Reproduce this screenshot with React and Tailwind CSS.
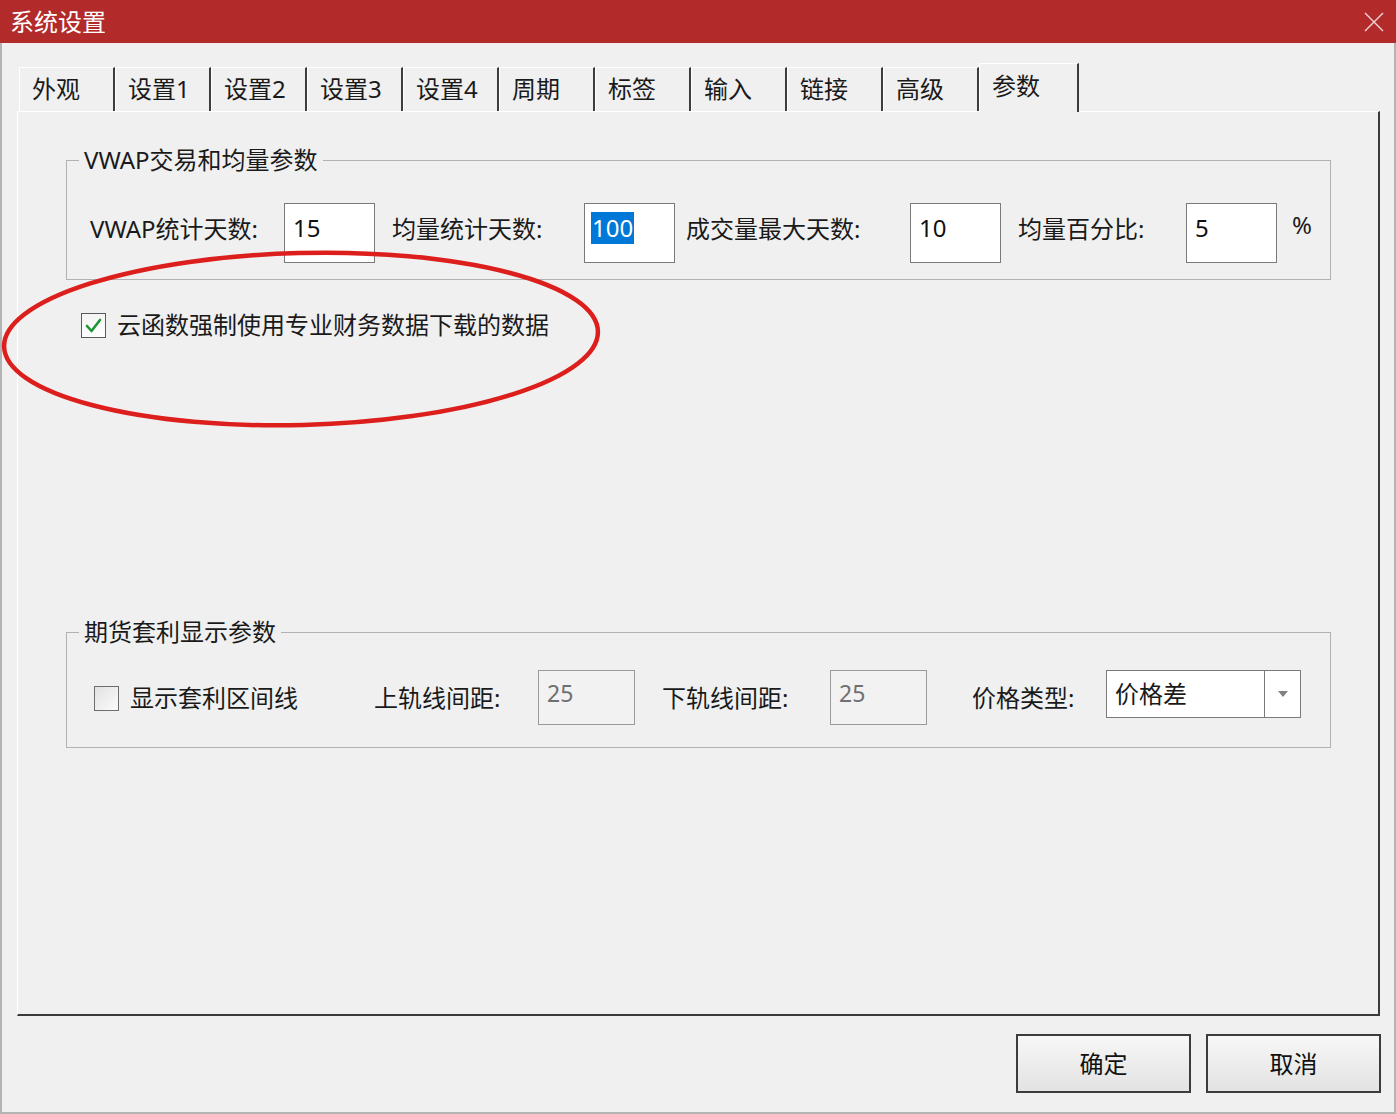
import React from "react";

const FONT = { fontFamily: '"Noto Sans", "Noto Sans CJK SC", sans-serif' };

const TABS = ["外观", "设置1", "设置2", "设置3", "设置4", "周期", "标签", "输入", "链接", "高级"];

function Tab({ label }) {
  return (
    <div className="w-[96px] h-[44px] border-t border-l border-white border-r-2 border-r-[#3c3c3c] pl-[12px] leading-[42px] text-[24px] text-[#1a1a1a]">
      {label}
    </div>
  );
}

function ActiveTab({ label }) {
  return (
    <div className="relative z-10 -mb-px w-[100px] h-[49px] bg-[#f0f0f0] border-t border-l border-white border-r-2 border-r-[#3c3c3c] pl-[12px] pt-[6px] leading-[32px] text-[24px] text-[#1a1a1a]">
      {label}
    </div>
  );
}

function TextBox({ children, width = "w-[91px]", height = "h-[60px]" }) {
  return (
    <div className={`${width} ${height} shrink-0 bg-white border border-[#7a7a7a] pl-[8px] pt-[9px] leading-[30px] text-[24px] text-[#111]`}>
      {children}
    </div>
  );
}

function DisabledBox({ children }) {
  return (
    <div className="w-[97px] h-[55px] shrink-0 bg-[#f2f2f2] border border-[#9a9a9a] pl-[8px] pt-[7px] leading-[30px] text-[23px] text-[#707070]">
      {children}
    </div>
  );
}

function CheckedBox() {
  return (
    <div className="w-[25px] h-[25px] shrink-0 border border-[#5a5a5a] bg-gradient-to-b from-[#f4f4f4] to-[#ffffff]">
      <svg width="23" height="23" viewBox="0 0 23 23">
        <path d="M5 12 L9.5 17 L18 6" fill="none" stroke="#1e9636" strokeWidth="2.6" strokeLinecap="round" strokeLinejoin="round" />
      </svg>
    </div>
  );
}

function EmptyBox() {
  return (
    <div className="w-[25px] h-[25px] shrink-0 border border-[#6e6e6e] bg-gradient-to-br from-[#e2e2e2] to-[#fbfbfb]" />
  );
}

function Button({ children }) {
  return (
    <div className="w-[175px] h-[59px] border-2 border-[#3c3c3c] bg-gradient-to-b from-[#f7f7f7] to-[#e3e3e3] flex items-center justify-center text-[24px] text-[#111]">
      {children}
    </div>
  );
}

export default function App() {
  return (
    <div className="relative w-[1396px] h-[1114px] bg-[#f0f0f0] overflow-hidden flex flex-col" style={FONT}>
      {/* title bar */}
      <div className="h-[43px] shrink-0 bg-[#b22b2a] flex items-center justify-between pl-[10px] pr-[12px]">
        <span className="text-white text-[24px] leading-[43px]">系统设置</span>
        <svg width="20" height="20" viewBox="0 0 20 20">
          <path d="M1 1 L19 19 M19 1 L1 19" stroke="#f3d6d6" strokeWidth="1.4" />
        </svg>
      </div>

      {/* window body */}
      <div className="flex-1 flex flex-col border-l-2 border-r-2 border-b-2 border-[#b4b4b4]">
        {/* tab strip */}
        <div className="mt-[20px] ml-[17px] h-[48px] flex items-end">
          {TABS.map((t) => (
            <Tab key={t} label={t} />
          ))}
          <ActiveTab label="参数" />
        </div>

        {/* tab page */}
        <div className="ml-[15px] w-[1363px] h-[905px] border-t border-l border-white border-r-2 border-b-2 border-r-[#3a3a3a] border-b-[#3a3a3a] pl-[48px] pt-[33px]">
          <fieldset className="w-[1265px] border border-[#b2b2b2]">
            <legend className="ml-[12px] px-[5px] text-[24px] leading-[30px] text-[#1a1a1a]">VWAP交易和均量参数</legend>
            <div className="flex items-start pl-[23px] pt-[28px] pb-[16px] text-[24px] text-[#1a1a1a]">
              <div className="w-[194px] pt-[11px] leading-[30px]">VWAP统计天数:</div>
              <TextBox>15</TextBox>
              <div className="ml-[17px] w-[192px] pt-[11px] leading-[30px]">均量统计天数:</div>
              <div className="w-[91px] h-[60px] shrink-0 bg-white border border-[#7a7a7a] pl-[6px] pt-[6px] text-[24px]">
                <span className="inline-block bg-[#0078d7] text-white leading-[32px] px-[1px]">100</span>
              </div>
              <div className="ml-[11px] w-[224px] pt-[11px] leading-[30px]">成交量最大天数:</div>
              <TextBox>10</TextBox>
              <div className="ml-[17px] w-[168px] pt-[11px] leading-[30px]">均量百分比:</div>
              <TextBox>5</TextBox>
              <div className="ml-[15px] pt-[7px] leading-[30px]">%</div>
            </div>
          </fieldset>

          <label className="mt-[30px] ml-[15px] h-[30px] flex items-center text-[24px] text-[#1a1a1a]">
            <CheckedBox />
            <span className="ml-[11px] leading-[30px]">云函数强制使用专业财务数据下载的数据</span>
          </label>

          <fieldset className="mt-[277px] w-[1265px] border border-[#b2b2b2]">
            <legend className="ml-[12px] px-[5px] text-[24px] leading-[30px] text-[#1a1a1a]">期货套利显示参数</legend>
            <div className="flex items-start pl-[27px] pt-[23px] pb-[22px] text-[24px] text-[#1a1a1a]">
              <div className="w-[280px] flex items-start">
                <div className="mt-[16px]">
                  <EmptyBox />
                </div>
                <span className="ml-[11px] mt-[13px] leading-[30px]">显示套利区间线</span>
              </div>
              <div className="w-[164px] pt-[13px] leading-[30px]">上轨线间距:</div>
              <DisabledBox>25</DisabledBox>
              <div className="ml-[27px] w-[168px] pt-[13px] leading-[30px]">下轨线间距:</div>
              <DisabledBox>25</DisabledBox>
              <div className="ml-[45px] w-[134px] pt-[13px] leading-[30px]">价格类型:</div>
              <div className="w-[195px] h-[48px] shrink-0 bg-white border border-[#7a7a7a] flex">
                <div className="flex-1 pl-[8px] pt-[8px] leading-[30px]">价格差</div>
                <div className="w-[36px] border-l border-[#7a7a7a] flex items-center justify-center">
                  <svg width="12" height="8" viewBox="0 0 12 8">
                    <path d="M1 1 L11 1 L6 7 Z" fill="#808080" />
                  </svg>
                </div>
              </div>
            </div>
          </fieldset>
        </div>

        {/* dialog buttons */}
        <div className="mt-[18px] flex justify-end gap-[15px] pr-[13px]">
          <Button>确定</Button>
          <Button>取消</Button>
        </div>
      </div>

      {/* red annotation ring around the cloud-function option */}
      <svg className="absolute left-0 top-[240px] pointer-events-none" width="620" height="200" viewBox="0 0 620 200">
        <ellipse cx="301" cy="99" rx="297" ry="86" fill="none" stroke="#dc1f1c" strokeWidth="4.5" transform="rotate(-1.5 301 99)" />
      </svg>
    </div>
  );
}
